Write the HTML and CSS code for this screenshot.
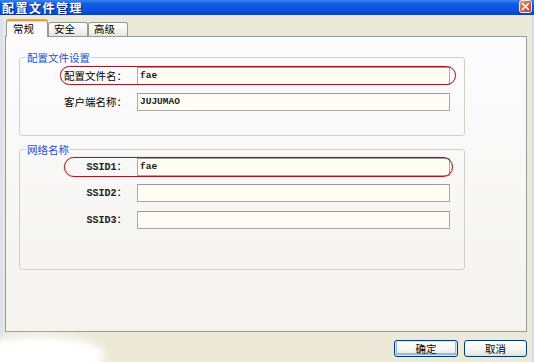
FILE: index.html
```html
<!DOCTYPE html>
<html lang="zh-CN">
<head>
<meta charset="utf-8">
<title>配置文件管理</title>
<link rel="stylesheet" href="styles.css">
</head>
<body>
<div class="window">
  <div class="titlebar">
    <span class="title">配置文件管理</span>
    <span class="close">
      <svg width="13" height="13" viewBox="0 0 13 13">
        <defs>
          <linearGradient id="cg" x1="0" y1="0" x2="1" y2="1">
            <stop offset="0" stop-color="#f0a58a"/>
            <stop offset="0.5" stop-color="#d9603d"/>
            <stop offset="1" stop-color="#b8401f"/>
          </linearGradient>
        </defs>
        <rect x="0.5" y="0.5" width="12" height="12" rx="2" fill="url(#cg)" stroke="#f4ece8"/>
        <path d="M3.5 3.5 L9.5 9.5 M9.5 3.5 L3.5 9.5" stroke="#ffffff" stroke-width="1.6" stroke-linecap="round"/>
      </svg>
    </span>
  </div>
  <div class="body">
    <div class="tabs">
      <div class="tab active">常规</div>
      <div class="tab">安全</div>
      <div class="tab">高级</div>
    </div>
    <div class="panel">
      <fieldset class="group g1">
        <legend>配置文件设置</legend>
        <div class="row">
          <span class="label">配置文件名：</span>
          <span class="input">fae</span>
          <span class="mark m1"></span>
        </div>
        <div class="row">
          <span class="label">客户端名称：</span>
          <span class="input">JUJUMAO</span>
        </div>
      </fieldset>
      <fieldset class="group g2">
        <legend>网络名称</legend>
        <div class="row">
          <span class="label"><span class="lat">SSID1</span>：</span>
          <span class="input">fae</span>
          <span class="mark m2"></span>
        </div>
        <div class="row">
          <span class="label"><span class="lat">SSID2</span>：</span>
          <span class="input"></span>
        </div>
        <div class="row r3">
          <span class="label"><span class="lat">SSID3</span>：</span>
          <span class="input"></span>
        </div>
      </fieldset>
    </div>
    <div class="buttons">
      <button class="btn default">确定</button>
      <button class="btn">取消</button>
    </div>
  </div>
  <div class="smudge"></div>
</div>
</body>
</html>
```
FILE: styles.css
```css
html, body {
  margin: 0;
  padding: 0;
}
body {
  width: 534px;
  height: 362px;
  overflow: hidden;
  background: #ece9d8;
  font-family: "Noto Sans CJK SC", "Noto Sans", sans-serif;
  font-size: 10.5px;
  color: #000;
}
.window {
  position: relative;
  width: 534px;
  height: 362px;
  overflow: hidden;
}
.titlebar {
  height: 15px;
  display: flex;
  align-items: center;
  justify-content: space-between;
  background: linear-gradient(#3d84f2 0%, #0f5de6 25%, #0a52dc 70%, #0842bd 100%);
  padding: 0 2px 0 2px;
}
.title {
  color: #fff;
  font-weight: bold;
  font-size: 12px;
  line-height: 15px;
  letter-spacing: 1.5px;
  text-shadow: 1px 1px 0 #0a2270;
}
.close {
  display: flex;
  margin-top: -2px;
}
.body {
  border-left: 3px solid #dde2ef;
  border-right: 2px solid #d6dbe9;
  padding: 4px 5px 0 2px;
  height: 347px;
}
.tabs {
  display: flex;
  align-items: flex-end;
  height: 17px;
  padding-left: 1px;
  position: relative;
  z-index: 1;
}
.tab {
  box-sizing: border-box;
  width: 40px;
  height: 14px;
  border: 1px solid #919b9c;
  border-bottom: none;
  border-radius: 3px 3px 0 0;
  background: linear-gradient(#ffffff, #f3f2ec 60%, #e6e4da);
  padding-left: 5px;
  line-height: 12px;
}
.tab.active {
  width: 42px;
  height: 18px;
  margin-bottom: -1px;
  padding-left: 6px;
  border-top: 2px solid #e9a03c;
  box-shadow: inset 0 1px 0 #ffd57c;
  background: #fcfcfe;
  line-height: 15px;
}
.panel {
  box-sizing: border-box;
  height: 296px;
  border: 1px solid #919b9c;
  background: linear-gradient(#fcfcfe, #f4f3ee);
  padding: 14px 0 0 13px;
}
.group {
  box-sizing: border-box;
  width: 446px;
  margin: 0;
  border: 1px solid #d0d0bf;
  border-radius: 3px;
  padding: 3px 14px 24px 0;
  min-width: 0;
}
.group legend {
  color: #1f4fc9;
  line-height: 13px;
  padding: 0 1px;
  margin-left: 6px;
}
.g2 {
  margin-top: 7px;
  padding-top: 2px;
  padding-bottom: 40px;
}
.row {
  position: relative;
  display: flex;
  align-items: center;
  height: 18px;
}
.row + .row {
  margin-top: 8px;
}
.row.r3 {
  margin-top: 9px;
}
.label {
  width: 107px;
  margin-right: 10px;
  text-align: right;
  line-height: 18px;
  white-space: nowrap;
}
.lat {
  font-family: "Liberation Mono", monospace;
  font-size: 10px;
  font-weight: bold;
  color: #222;
}
.input {
  box-sizing: border-box;
  width: 313px;
  height: 18px;
  border: 1px solid #a9a9a9;
  border-top-color: #9a9a9a;
  background: #fffdf3;
  padding-left: 2px;
  font-family: "Liberation Mono", monospace;
  font-size: 9.5px;
  font-weight: bold;
  line-height: 16px;
  color: #222;
}
.mark {
  position: absolute;
  top: -1px;
  box-sizing: border-box;
  border: 1px solid #9c1d29;
  box-shadow: 0 0 1px #c24a57;
  border-radius: 10px;
  pointer-events: none;
}
.m1 {
  left: 40px;
  width: 396px;
  height: 19px;
}
.m2 {
  left: 44px;
  width: 389px;
  height: 20px;
}
.buttons {
  display: flex;
  justify-content: flex-end;
  gap: 6px;
  margin-top: 8px;
}
.btn {
  box-sizing: border-box;
  width: 63px;
  height: 17px;
  padding: 0;
  border: 1px solid #003c74;
  border-radius: 3px;
  background: linear-gradient(#ffffff, #f4f4f0 60%, #e3e0d6);
  font-family: "Noto Sans CJK SC", "Noto Sans", sans-serif;
  font-size: 10.5px;
  line-height: 14px;
  color: #000;
}
.btn.default {
  width: 64px;
  box-shadow: inset 0 0 0 1px #cee7ff, inset 0 -1px 0 2px #98b8ea;
}
.smudge {
  position: absolute;
  left: -25px;
  top: 336px;
  width: 130px;
  height: 40px;
  border-radius: 50%;
  background: #ffffff;
  filter: blur(4px);
  pointer-events: none;
}
```
